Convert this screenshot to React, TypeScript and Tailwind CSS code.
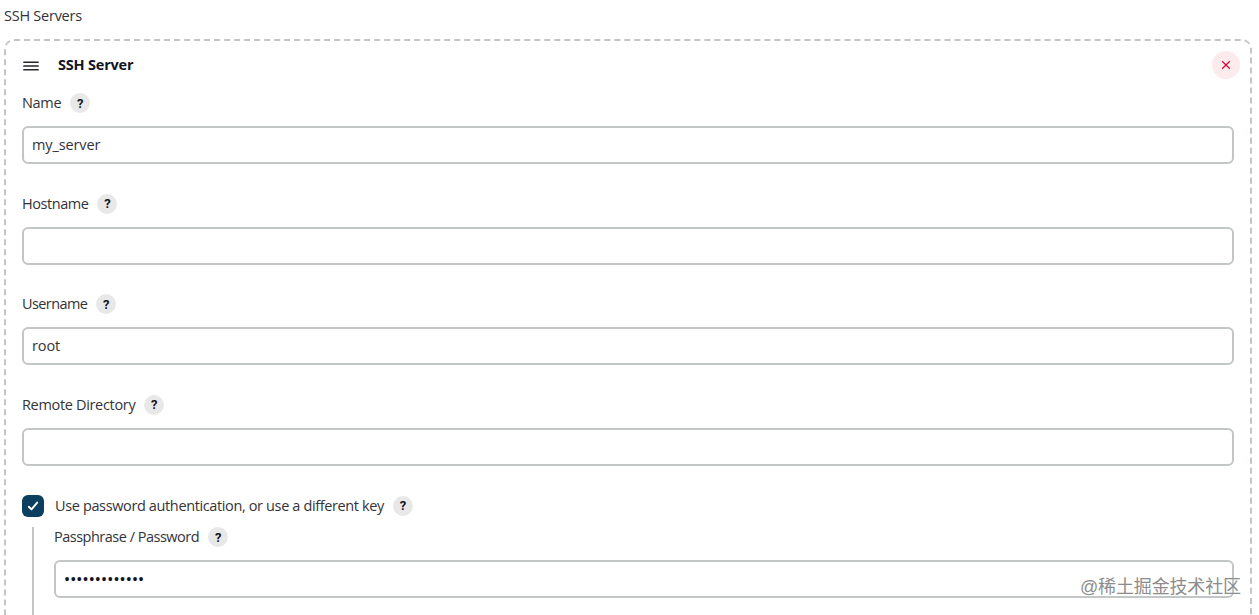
import clsx from "clsx"

interface HelpLabelProps {
  text: string
  spacing: string
}

function HelpButton() {
  return (
    <button className="flex h-5 w-5 shrink-0 items-center justify-center rounded-full bg-[#e8e8e8] font-['Roboto',sans-serif] text-[13px] font-bold leading-none tracking-normal text-[#14141f]">
      ?
    </button>
  )
}

function HelpLabel({ text, spacing }: HelpLabelProps) {
  return (
    <div className="flex h-5 items-center gap-[9px]">
      <label className={clsx("whitespace-nowrap", spacing)}>{text}</label>
      <HelpButton />
    </div>
  )
}

interface FieldProps extends HelpLabelProps {
  value: string
  type?: string
}

function Field({ text, spacing, value, type = "text" }: FieldProps) {
  return (
    <div className="mb-[29.67px]">
      <HelpLabel text={text} spacing={spacing} />
      <input
        type={type}
        defaultValue={value}
        className={clsx(
          "mt-[13px] block h-[38px] w-full rounded-md border-2 border-[#c3c6c6] bg-white px-2 outline-none",
          type === "password"
            ? "font-['Roboto',sans-serif] text-[18px] tracking-[0.1px] text-[#14141f]"
            : "pb-0.5 tracking-[-0.12px]"
        )}
      />
    </div>
  )
}

function App() {
  return (
    <div className="relative h-[615px] w-full overflow-hidden bg-white pl-1 pr-[7px] pt-1.5 font-['Open_Sans','Noto_Sans',sans-serif] text-[14.5px] text-[#333338]">
      <div className="h-5 leading-5 tracking-[-0.25px]">SSH Servers</div>
      <div className="mt-[13px] h-[700px] rounded-[10px] border-2 border-dashed border-[#c3c6c6] pl-4 pr-4">
        <div className="-mr-1.5 flex h-12 items-center">
          <svg width="18" height="18" viewBox="0 0 18 18" className="mt-0.5 text-[#26262b]" stroke="currentColor" strokeWidth="1.6">
            <path d="M1.3 5.3H16.7M1.3 9H16.7M1.3 12.7H16.7" />
          </svg>
          <span className="ml-[18px] pb-px font-bold tracking-[-0.2px] text-[#14141f]">SSH Server</span>
          <button className="ml-auto flex h-7 w-7 items-center justify-center rounded-full bg-[#fcebed]">
            <svg width="10" height="10" viewBox="0 0 10 10" stroke="#d6083b" strokeWidth="1.3">
              <path d="M1.2 1.2L8.8 8.8M8.8 1.2L1.2 8.8" />
            </svg>
          </button>
        </div>
        <div className="pt-[4px]">
          <Field text="Name" spacing="pb-px tracking-[-0.3px]" value="my_server" />
          <Field text="Hostname" spacing="tracking-[-0.45px]" value="" />
          <Field text="Username" spacing="pb-px tracking-[-0.6px]" value="root" />
          <Field text="Remote Directory" spacing="pb-px tracking-[-0.33px]" value="" />
        </div>
        <div className="-mt-px flex h-[22px] items-center">
          <div className="mr-[11px] flex h-[22px] w-[22px] items-center justify-center rounded-md bg-[#0b3f60]">
            <svg width="12" height="12" viewBox="0 0 12 12" fill="none" stroke="white" strokeWidth="1.9" strokeLinecap="round" strokeLinejoin="round">
              <path d="M1.8 6.8L4.5 9.4L10.2 2.6" />
            </svg>
          </div>
          <HelpLabel text="Use password authentication, or use a different key" spacing="tracking-[-0.37px]" />
        </div>
        <div className="ml-[10px] mt-[10px] h-[120px] border-l-2 border-[#c3c6c6] pl-5 pt-[0.5px]">
          <Field text="Passphrase / Password" spacing="pb-px tracking-[-0.5px]" value="rootpassword1" type="password" />
        </div>
      </div>
      <div className="absolute left-[1080px] top-[575px] whitespace-nowrap font-['Liberation_Sans','Noto_Sans_CJK_SC',sans-serif] text-[18px] leading-6 tracking-[-0.15px] text-[#8c8c8c]">
        @稀土掘金技术社区
      </div>
    </div>
  )
}

export default App
